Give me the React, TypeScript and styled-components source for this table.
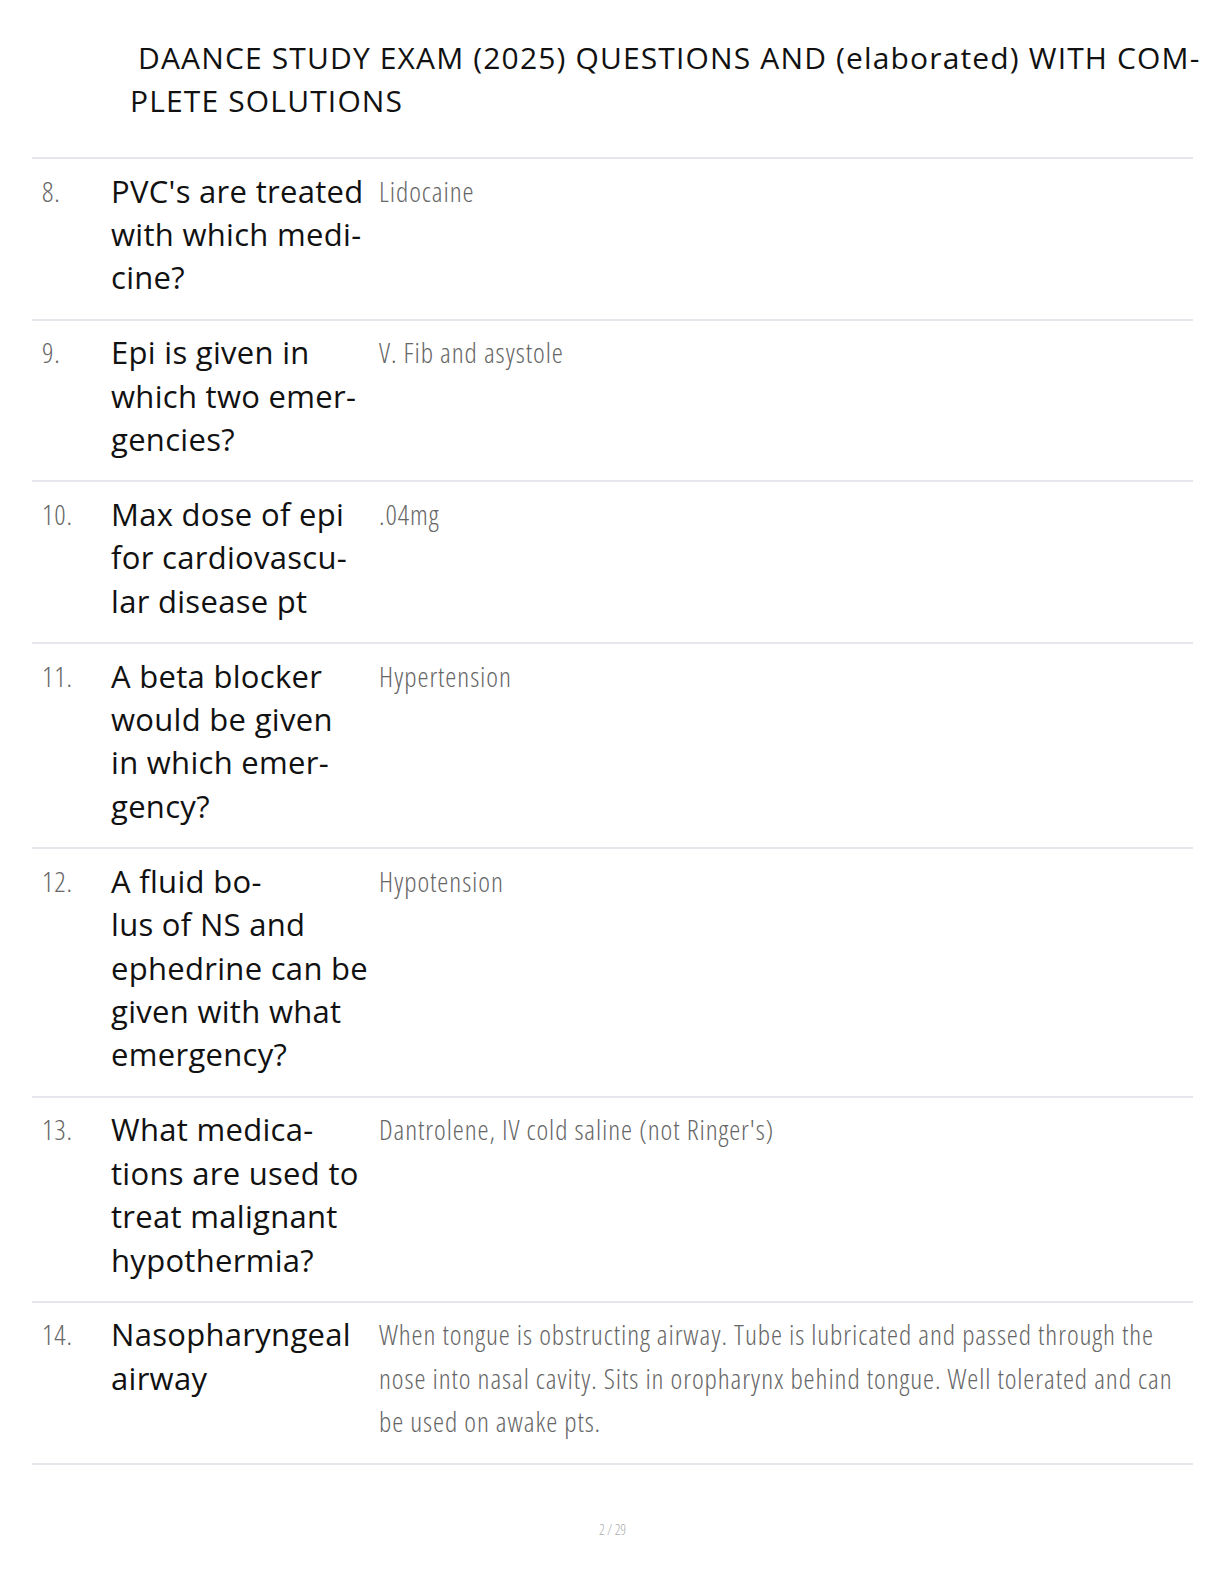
import React from "react";
import styled, { createGlobalStyle } from "styled-components";

const Global = createGlobalStyle`
  html, body {
    margin: 0;
    padding: 0;
    background: #ffffff;
  }
  body {
    font-family: "Open Sans", "Noto Sans", sans-serif;
  }
`;

// lines are kept as in the printed page, hyphen breaks included
const rows = [
  { n: "8.", q: ["PVC's are treated", "with which medi-", "cine?"], a: ["Lidocaine"] },
  { n: "9.", q: ["Epi is given in", "which two emer-", "gencies?"], a: ["V. Fib and asystole"] },
  { n: "10.", q: ["Max dose of epi", "for cardiovascu-", "lar disease pt"], a: [".04mg"] },
  { n: "11.", q: ["A beta blocker", "would be given", "in which emer-", "gency?"], a: ["Hypertension"] },
  {
    n: "12.",
    q: ["A fluid bo-", "lus of NS and", "ephedrine can be", "given with what", "emergency?"],
    a: ["Hypotension"],
  },
  {
    n: "13.",
    q: ["What medica-", "tions are used to", "treat malignant", "hypothermia?"],
    a: ["Dantrolene, IV cold saline (not Ringer's)"],
  },
  {
    n: "14.",
    q: ["Nasopharyngeal", "airway"],
    a: [
      "When tongue is obstructing airway. Tube is lubricated and passed through the",
      "nose into nasal cavity. Sits in oropharynx behind tongue. Well tolerated and can",
      "be used on awake pts.",
    ],
  },
];

const App = () => {
  return (
    <Page>
      <Global />
      <Title>
        <TitleLine $indent>DAANCE STUDY EXAM (2025) QUESTIONS AND (elaborated) WITH COM-</TitleLine>
        <TitleLine>PLETE SOLUTIONS</TitleLine>
      </Title>
      <Table>
        {rows.map((r) => (
          <Row key={r.n}>
            <Num>{r.n}</Num>
            <Question>
              {r.q.map((l) => (
                <Line key={l}>{l}</Line>
              ))}
            </Question>
            <Answer>
              {r.a.map((l) => (
                <Line key={l}>{l}</Line>
              ))}
            </Answer>
          </Row>
        ))}
      </Table>
      <Footer>2 / 29</Footer>
    </Page>
  );
};

export default App;

const Page = styled.div`
  width: 1224px;
  min-height: 1584px;
  box-sizing: border-box;
  padding: 36px 31px 0 32px;
`;

const Title = styled.h1`
  margin: 0 0 35px 98px;
  display: flex;
  flex-direction: column;
  font-family: "Open Sans", sans-serif;
  font-weight: 500;
  font-size: 30px;
  letter-spacing: 1.15px;
  line-height: 43px;
  color: #111;
`;

const TitleLine = styled.span<{ $indent?: boolean }>`
  padding-left: ${(p) => (p.$indent ? "8px" : "0")};
  white-space: nowrap;
`;

const Table = styled.div`
  border-top: 2px solid #e6e6ec;
`;

const Row = styled.div`
  display: grid;
  grid-template-columns: 79px 268px 1fr;
  padding: 10.5px 0 19px;
  border-bottom: 2px solid #e6e6ec;
`;

const Line = styled.div`
  white-space: nowrap;
`;

const Light = styled.div`
  font-family: "Open Sans", sans-serif;
  font-stretch: 75%;
  font-weight: 300;
  font-size: 28px;
  letter-spacing: 0.9px;
  line-height: 43.4px;
  color: #666;
`;

const Num = styled(Light)`
  padding-left: 10px;
`;

const Question = styled.div`
  font-family: "Open Sans", sans-serif;
  font-weight: 500;
  font-size: 31px;
  letter-spacing: 0.3px;
  line-height: 43.4px;
  color: #111;
`;

const Answer = styled(Light)``;

const Footer = styled.div`
  margin-top: 55px;
  text-align: center;
  font-family: "Open Sans", sans-serif;
  font-stretch: 75%;
  font-weight: 300;
  font-size: 14px;
  color: #aaa;
`;
